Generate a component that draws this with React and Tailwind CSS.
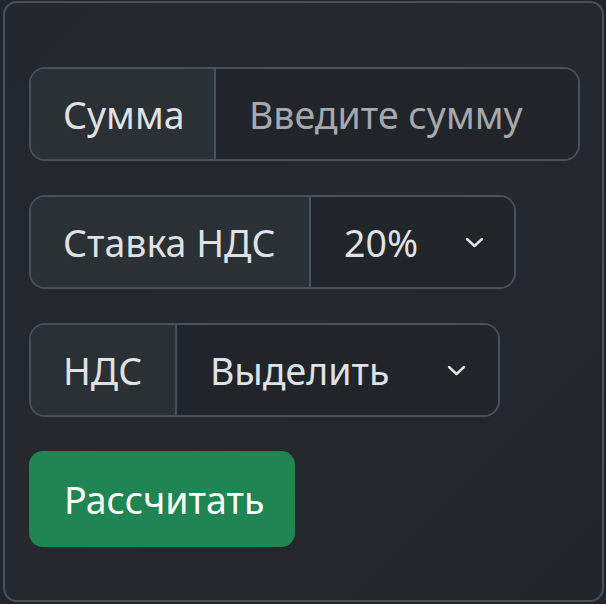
const font = { fontFamily: '"Noto Sans", "Open Sans", sans-serif' };

const Chevron = () => (
    <svg width="19" height="11" viewBox="0 0 19 11" fill="none" className="shrink-0">
        <path d="M2 2l7.5 7 7.5-7" stroke="#dee2e6" strokeWidth="2.4" strokeLinecap="round" strokeLinejoin="round" />
    </svg>
);

const App = () => {
    return (
        <div className="w-[606px] h-[604px] bg-[#212529] pl-[3px] pt-[1px]" style={font}>
            <div className="w-[601px] h-[601px] rounded-[14px] border-2 border-[#495057] bg-gradient-to-br from-[#23272b] via-[#25282d] to-[#222529] pl-[24px] pt-[64px] flex flex-col gap-[34px] text-[37.5px] text-[#dee2e6]">
                {/* Сумма */}
                <div className="flex w-[551px] h-[94px] rounded-[16px] border-2 border-[#495057] overflow-hidden">
                    <div className="w-[185px] shrink-0 flex items-center pl-[32px] pt-[3px] bg-[#2b3035] border-r-2 border-[#495057]">
                        Сумма
                    </div>
                    <div className="flex-1 flex items-center pl-[33px] pt-[3px] bg-[#212529] text-[#a5a9ad]">
                        Введите сумму
                    </div>
                </div>

                {/* Ставка НДС */}
                <div className="flex w-[487px] h-[94px] rounded-[16px] border-2 border-[#495057] overflow-hidden">
                    <div className="w-[280px] shrink-0 flex items-center pl-[32px] pt-[3px] bg-[#2b3035] border-r-2 border-[#495057]">
                        Ставка НДС
                    </div>
                    <div className="flex-1 flex items-center justify-between pl-[33px] pr-[30px] bg-[#212529]">
                        <span className="pt-[3px]">20%</span>
                        <Chevron />
                    </div>
                </div>

                {/* НДС */}
                <div className="flex w-[471px] h-[94px] rounded-[16px] border-2 border-[#495057] overflow-hidden">
                    <div className="w-[146px] shrink-0 flex items-center pl-[32px] pt-[3px] bg-[#2b3035] border-r-2 border-[#495057]">
                        НДС
                    </div>
                    <div className="flex-1 flex items-center justify-between pl-[33px] pr-[32px] bg-[#212529]">
                        <span className="pt-[3px]">Выделить</span>
                        <Chevron />
                    </div>
                </div>

                <button className="w-[266px] h-[96px] rounded-[14px] bg-[#1e8553] text-white text-left pl-[35px] pt-[3px]">
                    Рассчитать
                </button>
            </div>
        </div>
    );
};

export default App;
